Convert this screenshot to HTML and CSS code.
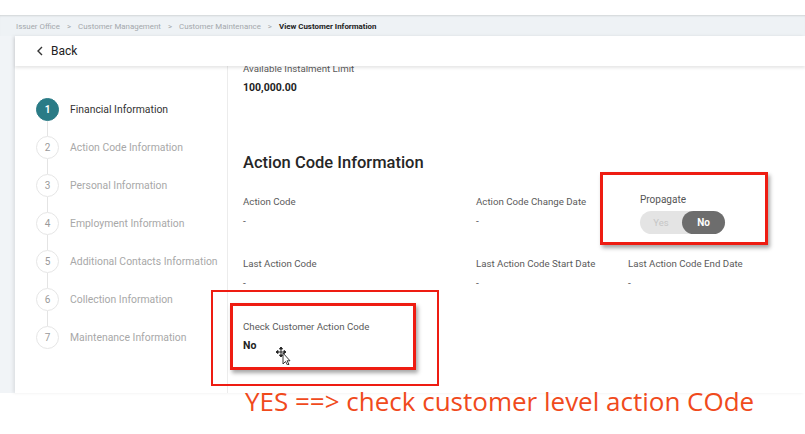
FILE: index.html
```html
<!DOCTYPE html>
<html>
<head>
<meta charset="utf-8">
<link rel="stylesheet" href="styles.css">
</head>
<body>
<div class="top-gap"></div>
<nav class="breadcrumb">
  <span class="crumb">Issuer Office</span><span class="sep">&gt;</span>
  <span class="crumb">Customer Management</span><span class="sep">&gt;</span>
  <span class="crumb">Customer Maintenance</span><span class="sep">&gt;</span>
  <span class="crumb current">View Customer Information</span>
</nav>
<div class="page">
  <div class="card">
    <header class="back-bar">
      <svg class="chev" width="8" height="10" viewBox="0 0 8 10"><path d="M6 1 L2 5 L6 9" fill="none" stroke="#333" stroke-width="1.4"/></svg>
      <span class="back-text">Back</span>
    </header>
    <div class="card-body">
      <aside class="steps">
        <div class="step active"><span class="num">1</span><span class="label">Financial Information</span></div>
        <div class="step"><span class="num">2</span><span class="label">Action Code Information</span></div>
        <div class="step"><span class="num">3</span><span class="label">Personal Information</span></div>
        <div class="step"><span class="num">4</span><span class="label">Employment Information</span></div>
        <div class="step"><span class="num">5</span><span class="label">Additional Contacts Information</span></div>
        <div class="step"><span class="num">6</span><span class="label">Collection Information</span></div>
        <div class="step last"><span class="num">7</span><span class="label">Maintenance Information</span></div>
      </aside>
      <main class="content">
        <div class="field first">
          <div class="f-label">Available Instalment Limit</div>
          <div class="f-value">100,000.00</div>
        </div>
        <h2 class="section-title">Action Code Information</h2>
        <div class="grid">
          <div class="field">
            <div class="f-label">Action Code</div>
            <div class="f-dash">-</div>
          </div>
          <div class="field">
            <div class="f-label">Action Code Change Date</div>
            <div class="f-dash">-</div>
          </div>
          <div class="field propagate">
            <div class="f-label">Propagate</div>
            <div class="toggle"><span class="opt">Yes</span><span class="opt on">No</span></div>
          </div>
          <div class="field">
            <div class="f-label">Last Action Code</div>
            <div class="f-dash">-</div>
          </div>
          <div class="field">
            <div class="f-label">Last Action Code Start Date</div>
            <div class="f-dash">-</div>
          </div>
          <div class="field">
            <div class="f-label">Last Action Code End Date</div>
            <div class="f-dash">-</div>
          </div>
          <div class="field check">
            <div class="f-label">Check Customer Action Code</div>
            <div class="f-value">No</div>
          </div>
        </div>
        <div class="mark mark-propagate"></div>
        <div class="mark mark-check"></div>
        <div class="mark-outer"></div>
        <svg class="cursor" width="16" height="18" viewBox="0 0 16 18">
          <path d="M5 1 v8 M1 5 h8 M5 0 l-1.5 2 h3 z M5 10 l-1.5 -2 h3 z M0 5 l2 -1.5 v3 z M10 5 l-2 -1.5 v3 z" stroke="#222" stroke-width="1" fill="#222"/>
          <path d="M7 6 L7 17 L9.5 14.5 L11.5 18 L13 17.3 L11 13.8 L14 13.8 Z" fill="#fff" stroke="#222" stroke-width="0.9"/>
        </svg>
      </main>
    </div>
  </div>
</div>
<div class="caption">YES ==&gt; check customer level action COde</div>
</body>
</html>
```
FILE: styles.css
```css
* { box-sizing: border-box; }
html, body { margin: 0; padding: 0; background: #fff; }
body {
  width: 805px;
  height: 434px;
  overflow: hidden;
  font-family: Roboto, "Liberation Sans", Arial, sans-serif;
  color: #333;
  position: relative;
}
.top-gap { height: 15px; background: #fff; }
.breadcrumb {
  height: 21px;
  background: #eef2f5;
  box-shadow: inset 0 2px 2px -1px rgba(0,0,0,0.12);
  display: flex;
  align-items: center;
  padding-left: 16px;
  padding-top: 2px;
  font-size: 7.9px;
  color: #a4a8ac;
  white-space: nowrap;
}
.sep { margin: 0 7px; }
.crumb.current { color: #222; font-weight: 700; }
.page {
  height: 357px;
  background: #f1f4f7;
  padding-left: 15px;
  display: flex;
}
.card {
  flex: 1;
  background: #fff;
  box-shadow: -2px 0 3px rgba(0,0,0,0.08);
  display: flex;
  flex-direction: column;
}
.back-bar {
  height: 30px;
  display: flex;
  align-items: center;
  padding-left: 21px;
  background: #fff;
  position: relative;
  z-index: 2;
  box-shadow: 0 2px 3px rgba(0,0,0,0.10);
}
.chev { margin-right: 7px; }
.back-text { font-size: 12px; color: #222; }
.card-body { flex: 1; display: flex; min-height: 0; }
.steps {
  width: 213px;
  border-right: 1px solid #ececec;
  padding-top: 32px;
  padding-left: 21px;
}
.step {
  display: flex;
  align-items: center;
  height: 22px;
  margin-bottom: 16px;
  position: relative;
}
.step::after {
  content: "";
  position: absolute;
  left: 11px;
  top: 23px;
  height: 15px;
  border-left: 1px solid #e4e4e4;
}
.step.last::after { display: none; }
.num {
  width: 23px;
  height: 23px;
  border-radius: 50%;
  border: 1px solid #e6e6e6;
  background: #fff;
  color: #9a9a9a;
  font-size: 10px;
  display: flex;
  align-items: center;
  justify-content: center;
  flex: none;
  margin-right: 11px;
}
.label { font-size: 10.4px; color: #a8a8a8; white-space: nowrap; }
.step.active .num { background: #2a7b86; border-color: #2a7b86; color: #fff; font-weight: 700; }
.step.active .label { color: #333; }
.content {
  flex: 1;
  position: relative;
  padding-left: 15px;
}
.field.first { margin-top: -3px; }
.f-label { font-size: 9.7px; color: #5a5a5a; line-height: 12px; }
.f-value { font-size: 10.5px; font-weight: 700; color: #222; margin-top: 6px; line-height: 13px; }
.f-dash { font-size: 10px; color: #666; margin-top: 8px; line-height: 12px; }
.section-title {
  margin: 59px 0 0;
  font-size: 16.5px;
  font-weight: 500;
  color: #262626;
  line-height: 20px;
}
.grid {
  display: grid;
  grid-template-columns: 233px 152px 1fr;
  row-gap: 24px;
  margin-top: 23px;
}
.propagate { padding-left: 12px; margin-top: -2px; }
.propagate .f-label { font-size: 10px; color: #555; }
.toggle {
  margin-top: 5px;
  width: 85px;
  height: 23px;
  border-radius: 12px;
  background: #e4e4e4;
  display: flex;
  align-items: center;
}
.opt { flex: 1; text-align: center; font-size: 9.5px; color: #c6c6c6; }
.opt.on {
  flex: none;
  width: 43px;
  height: 23px;
  line-height: 23px;
  border-radius: 12px;
  background: #6d6d6d;
  color: #fff;
  font-weight: 700;
  font-size: 10px;
}
.check { padding-top: 5px; margin-top: 2px; }
.mark {
  position: absolute;
  border: 3px solid #ee1c12;
  box-shadow: 2px 3px 4px rgba(0,0,0,0.35);
}
.mark-propagate { left: 372px; top: 106px; width: 168px; height: 73px; }
.mark-check { left: 2px; top: 237px; width: 186px; height: 67px; }
.mark-outer {
  position: absolute;
  left: -17px;
  top: 224px;
  width: 228px;
  height: 96px;
  border: 2px solid #ee1c12;
}
.cursor { position: absolute; left: 48px; top: 281px; }
.caption {
  position: absolute;
  left: 245px;
  top: 383px;
  font-family: "Open Sans", "Noto Sans", sans-serif;
  font-size: 26px;
  color: #f04a1c;
  white-space: nowrap;
}
```
